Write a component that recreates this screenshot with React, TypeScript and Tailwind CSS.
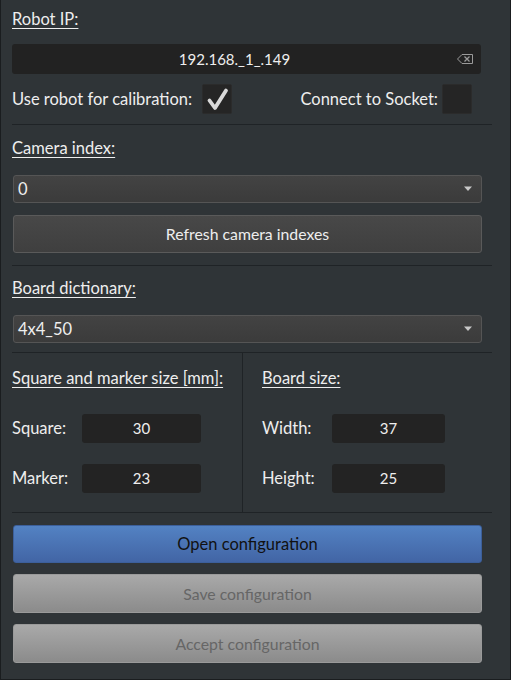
import React from 'react';

const Label: React.FC<{ children: React.ReactNode }> = ({ children }) => (
    <div className="h-5 leading-5 underline underline-offset-[3px] decoration-1">{children}</div>
);

const Separator = () => <div className="h-px w-[480px] bg-[#1f2326]" />;

const Checkbox: React.FC<{ checked?: boolean }> = ({ checked }) => (
    <div className="w-[30px] h-[30px] bg-[#252525] border border-[#2b2b2b] rounded-[2px] flex items-center justify-center">
        {checked && (
            <svg width="26" height="26" viewBox="0 0 26 26">
                <path d="M5.5 14.5 L11 22 L22 4.5" fill="none" stroke="#d9d9d9" strokeWidth="3.8" strokeLinecap="round" strokeLinejoin="round" />
            </svg>
        )}
    </div>
);

const Combo: React.FC<{ value: string }> = ({ value }) => (
    <div className="h-[28px] w-[469px] ml-px flex items-center justify-between px-[4px] rounded-[3px] border border-[#555] bg-gradient-to-b from-[#434343] to-[#3b3b3b]">
        <span>{value}</span>
        <svg width="10" height="6" viewBox="0 0 10 6" className="mr-[4px]">
            <path d="M1 0.5 H9 L5 5 Z" fill="#c8c8c8" />
        </svg>
    </div>
);

const NumField: React.FC<{ value: string; w: string }> = ({ value, w }) => (
    <div className={`h-[29px] ${w} bg-[#232323] rounded-[3px] flex items-center justify-center text-[15px]`}>{value}</div>
);

const App: React.FC = () => {
    return (
        <div className="w-[511px] h-[680px] bg-[#2f3437] border-l border-r border-b border-[#1a1d1f] text-[#eeeeee] text-[16.5px] [font-family:Lato,sans-serif] pl-[11px] flex flex-col">
            <div className="mt-[9px]"><Label>Robot IP:</Label></div>

            <div className="mt-[15px] h-[30px] w-[469px] bg-[#222222] rounded-[3px] flex items-center">
                <div className="flex-1 text-center text-[15px]">192.168._1_.149</div>
                <svg width="16" height="10" viewBox="0 0 16 10" className="mr-[8px]">
                    <path d="M5 0.5 H15.5 V9.5 H5 L0.5 5 Z" fill="none" stroke="#9a9a9a" strokeWidth="1" />
                    <path d="M7.5 2.5 L12.5 7.5 M12.5 2.5 L7.5 7.5" stroke="#9a9a9a" strokeWidth="1.3" />
                </svg>
            </div>

            <div className="mt-[10px] h-[30px] w-[460px] flex items-center">
                <span>Use robot for calibration:</span>
                <div className="ml-[10px]"><Checkbox checked /></div>
                <span className="ml-auto">Connect to Socket:</span>
                <div className="ml-[4px]"><Checkbox /></div>
            </div>

            <div className="mt-[10px]"><Separator /></div>

            <div className="mt-[13px]"><Label>Camera index:</Label></div>
            <div className="mt-[17px]"><Combo value="0" /></div>
            <div className="mt-[12px] ml-px h-[38px] w-[469px] rounded-[3px] border border-[#5a5a5a] bg-gradient-to-b from-[#484848] to-[#3f3f3f] flex items-center justify-center text-[15.8px]">
                Refresh camera indexes
            </div>

            <div className="mt-[12px]"><Separator /></div>

            <div className="mt-[12px]"><Label>Board dictionary:</Label></div>
            <div className="mt-[17px]"><Combo value="4x4_50" /></div>

            <div className="mt-[9px]"><Separator /></div>

            <div className="flex h-[159px] w-[480px]">
                <div className="w-[230px] flex flex-col">
                    <div className="mt-[15px]"><Label>Square and marker size [mm]:</Label></div>
                    <div className="mt-[26px] flex items-center">
                        <span className="w-[70px]">Square:</span>
                        <NumField value="30" w="w-[119px]" />
                    </div>
                    <div className="mt-[21px] flex items-center">
                        <span className="w-[70px]">Marker:</span>
                        <NumField value="23" w="w-[119px]" />
                    </div>
                </div>
                <div className="w-px bg-[#1f2326]" />
                <div className="flex-1 pl-[19px] flex flex-col">
                    <div className="mt-[15px]"><Label>Board size:</Label></div>
                    <div className="mt-[26px] flex items-center">
                        <span className="w-[70px]">Width:</span>
                        <NumField value="37" w="w-[113px]" />
                    </div>
                    <div className="mt-[21px] flex items-center">
                        <span className="w-[70px]">Height:</span>
                        <NumField value="25" w="w-[113px]" />
                    </div>
                </div>
            </div>

            <Separator />

            <div className="mt-[12px] ml-px h-[38px] w-[469px] rounded-[3px] border border-[#3c5f9a] bg-gradient-to-b from-[#5382c3] to-[#4265a5] flex items-center justify-center text-[#111] text-[16.5px]">
                Open configuration
            </div>
            <div className="mt-[11px] ml-px h-[39px] w-[469px] rounded-[3px] border border-[#9a9a9a] bg-gradient-to-b from-[#a9a9a9] to-[#8b8b8b] flex items-center justify-center text-[#666] text-[15.8px]">
                Save configuration
            </div>
            <div className="mt-[11px] ml-px h-[39px] w-[469px] rounded-[3px] border border-[#9a9a9a] bg-gradient-to-b from-[#a9a9a9] to-[#8b8b8b] flex items-center justify-center text-[#666] text-[15.8px]">
                Accept configuration
            </div>
        </div>
    );
};

export default App;
